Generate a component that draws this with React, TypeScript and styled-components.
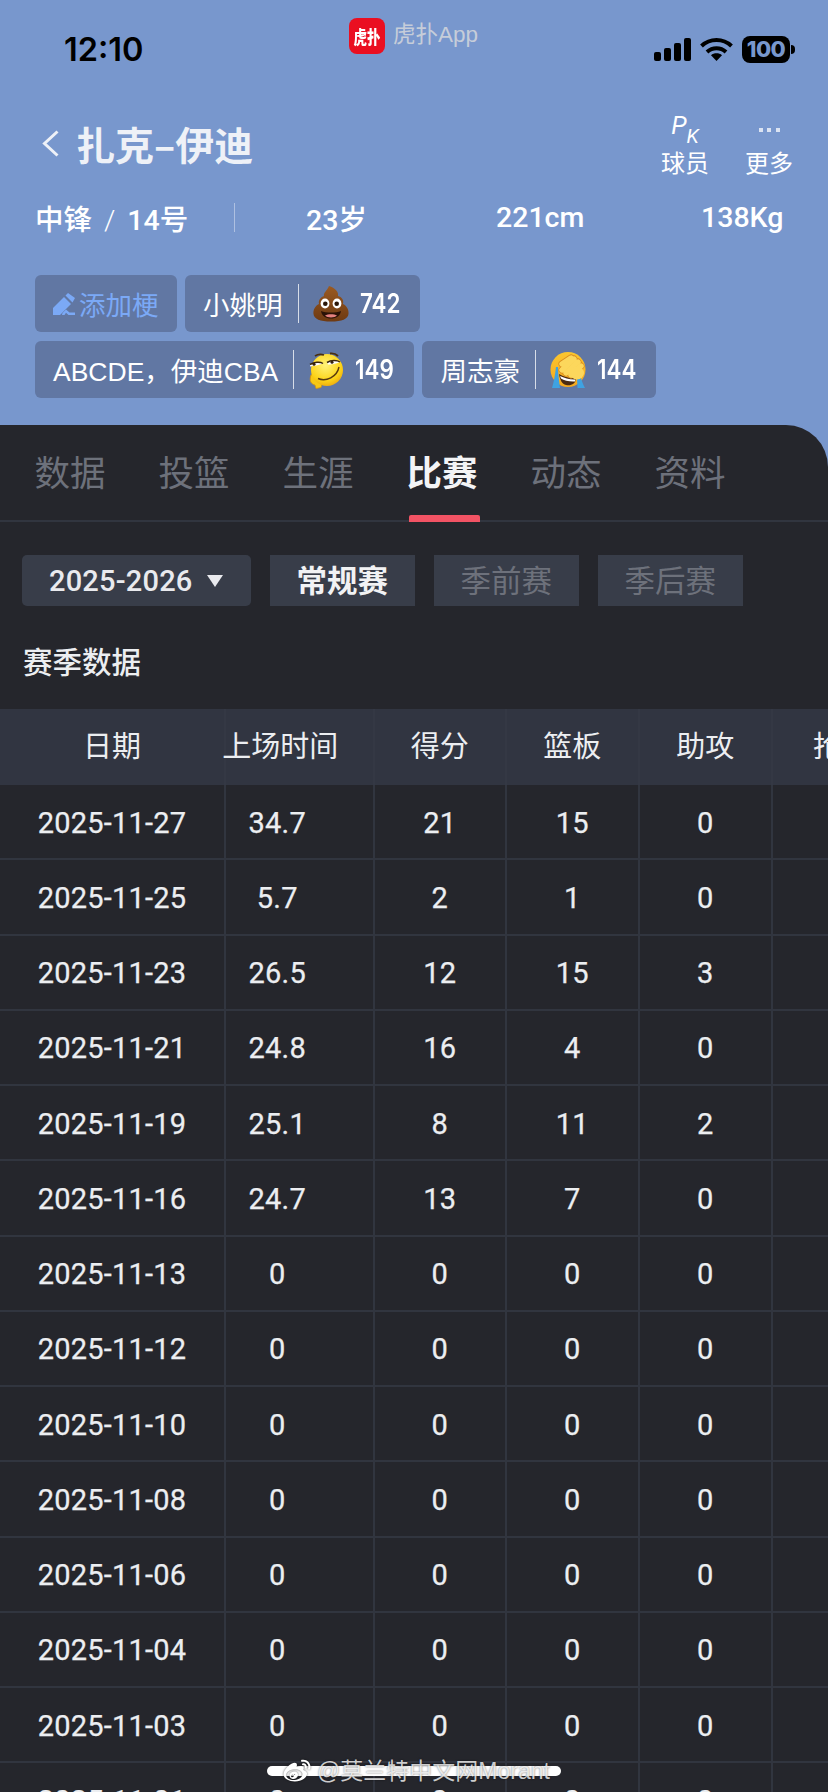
import React from "react";
import styled, { createGlobalStyle } from "styled-components";
import { FaWeibo } from "react-icons/fa";

const Global = createGlobalStyle`
  html, body { margin: 0; padding: 0; background: #25262c; }
  * { box-sizing: border-box; }
  body { font-family: Roboto, "Noto Sans CJK SC", sans-serif; }
`;

const Page = styled.div`
  position: relative;
  width: 828px;
  height: 1792px;
  overflow: hidden;
  background: #7897cd;
  display: flex;
  flex-direction: column;
`;

const StatusBar = styled.div`
  height: 112px;
  padding: 18px 33px 0 64px;
  display: grid;
  grid-template-columns: 285px 1fr auto;
  align-items: start;
  flex: none;
`;
const Time = styled.div`
  font-family: Inter, sans-serif;
  font-weight: 600;
  font-size: 32.5px;
  line-height: 40px;
  margin-top: 12px;
  color: #000;
`;
const AppChip = styled.div`
  display: flex;
  align-items: center;
  gap: 8px;
  height: 36px;
`;
const AppLogo = styled.div`
  width: 36px;
  height: 36px;
  border-radius: 8px;
  background: #ea0f21;
  display: flex;
  align-items: center;
  justify-content: center;
  overflow: hidden;
`;
const AppLogoText = styled.span`
  color: #fff;
  font-family: "Noto Sans CJK SC", sans-serif;
  font-weight: 900;
  font-size: 18px;
  line-height: 18px;
  white-space: nowrap;
  transform: scaleX(0.75);
`;
const AppName = styled.span`
  font-family: "Liberation Sans", "Noto Sans CJK SC", sans-serif;
  font-size: 22.5px;
  line-height: 30px;
  margin-bottom: 3px;
  color: #c6cdd9;
`;
const StatusIcons = styled.div`
  display: flex;
  align-items: center;
  height: 27px;
  margin-top: 18px;
  gap: 9px;
`;
const Battery = styled.div`
  display: flex;
  align-items: center;
  gap: 1px;
`;
const BatteryBody = styled.div`
  width: 48px;
  height: 27px;
  border-radius: 8px;
  background: #000;
  color: #7897cd;
  font-family: Inter, sans-serif;
  font-weight: 800;
  font-size: 22px;
  line-height: 27px;
  text-align: center;
  letter-spacing: -0.5px;
`;
const BatteryNub = styled.div`
  width: 4px;
  height: 9px;
  border-radius: 0 4px 4px 0;
  background: #000;
`;

const TitleRow = styled.div`
  height: 66px;
  padding: 0 35px 0 42px;
  display: flex;
  justify-content: space-between;
  align-items: flex-start;
  flex: none;
`;
const TitleLeft = styled.div`
  display: flex;
  align-items: center;
  height: 62px;
  gap: 17px;
`;
const Title = styled.h1`
  margin: 0;
  font-family: "Noto Sans CJK SC", sans-serif;
  font-size: 39px;
  font-weight: 700;
  line-height: 46px;
  color: #eef1f7;
  white-space: nowrap;
`;
const Actions = styled.div`
  display: flex;
  gap: 36px;
`;
const Action = styled.div`
  width: 48px;
  display: flex;
  flex-direction: column;
  align-items: center;
`;
const ActionMark = styled.div`
  height: 31px;
  width: 46px;
  display: flex;
  justify-content: center;
  align-items: center;
  margin-top: 2px;
`;
const PkMark = styled.div`
  display: flex;
  height: 28px;
  color: #fff;
  font-family: Roboto, sans-serif;
  font-weight: 400;
  font-style: italic;
`;
const PkP = styled.span`
  font-size: 25px;
  line-height: 20px;
  align-self: flex-start;
`;
const PkK = styled.span`
  font-size: 20px;
  line-height: 16px;
  align-self: flex-end;
`;
const Dots = styled.div`
  display: flex;
  gap: 4.5px;
`;
const Dot = styled.span`
  width: 4px;
  height: 4px;
  background: #dbe3f2;
`;
const ActionLabel = styled.div`
  font-family: "Noto Sans CJK SC", sans-serif;
  font-size: 24px;
  line-height: 33px;
  color: #fff;
  white-space: nowrap;
`;

const MetaRow = styled.div`
  margin-top: 19px;
  height: 40px;
  padding-left: 35px;
  display: grid;
  grid-template-columns: 199px 72px 190px 205px auto;
  align-items: center;
  color: #fff;
  font-size: 28.5px;
  font-weight: 500;
  flex: none;
`;
const MetaText = styled.span`
  white-space: nowrap;
`;
const MetaSlash = styled.span`
  font-weight: 300;
  margin: 0 12px;
`;
const MetaRule = styled.span`
  width: 1px;
  height: 29px;
  background: rgba(255, 255, 255, 0.4);
`;

const TagBlock = styled.div`
  margin: 38px 0 27px 35px;
  display: flex;
  flex-direction: column;
  gap: 9px;
  flex: none;
`;
const TagRow = styled.div`
  display: flex;
  gap: 8.5px;
`;
const Tag = styled.div`
  height: 57px;
  padding: 0 18px;
  display: flex;
  align-items: center;
  border-radius: 6px;
  background: #6177a3;
  color: #fff;
  font-family: "Liberation Sans", "Noto Sans CJK SC", sans-serif;
  font-size: 26.5px;
  white-space: nowrap;
`;
const AddLabel = styled.span`
  color: #7ba9f6;
  margin-left: 4px;
`;
const TagRule = styled.span`
  width: 1px;
  height: 39px;
  margin: 0 14px 0 15px;
  background: rgba(255, 255, 255, 0.75);
`;
const Count = styled.span`
  display: inline-block;
  margin-left: 11px;
  margin-right: -6px;
  font-family: Inter, sans-serif;
  font-weight: 600;
  font-size: 27px;
  transform: scaleX(0.83);
  transform-origin: left center;
`;
const EmojiBox = styled.svg`
  width: 36px;
  height: 38px;
  flex: none;
`;

const Panel = styled.div`
  flex: 1;
  min-height: 0;
  background: #25262c;
  border-top-right-radius: 42px;
  overflow: hidden;
`;
const Tabs = styled.div`
  height: 97px;
  padding: 0 0 0 35px;
  display: flex;
  gap: 54px;
  align-items: center;
  border-bottom: 2px solid #31353f;
`;
const TabItem = styled.div<{ $active?: boolean }>`
  position: relative;
  width: 70px;
  height: 95px;
  padding-top: 18px;
  font-family: "Noto Sans CJK SC", sans-serif;
  font-size: 35.5px;
  line-height: 56px;
  display: flex;
  justify-content: center;
  white-space: nowrap;
  font-weight: ${(p) => (p.$active ? 700 : 400)};
  color: ${(p) => (p.$active ? "#f3f4f6" : "#6d717b")};
  &::after {
    content: "";
    display: ${(p) => (p.$active ? "block" : "none")};
    position: absolute;
    left: 2px;
    width: 71px;
    bottom: -2px;
    height: 7px;
    border-radius: 2px 2px 0 0;
    background: #f25364;
  }
`;

const Filters = styled.div`
  margin-top: 33px;
  padding-left: 22px;
  display: flex;
  gap: 18.5px;
  height: 51px;
`;
const SeasonSelect = styled.div`
  width: 229px;
  padding-left: 27px;
  display: flex;
  align-items: center;
  gap: 14px;
  border-radius: 5px;
  background: #383d49;
  color: #e9eaee;
  font-size: 29px;
  font-weight: 500;
  letter-spacing: 0.2px;
`;
const Caret = styled.span`
  width: 0;
  height: 0;
  border-left: 8px solid transparent;
  border-right: 8px solid transparent;
  border-top: 12px solid #e9eaee;
`;
const SeasonType = styled.div<{ $active?: boolean }>`
  width: 145.5px;
  padding-bottom: 4px;
  background: #383d49;
  display: flex;
  align-items: center;
  justify-content: center;
  font-family: "Noto Sans CJK SC", sans-serif;
  font-size: 30.5px;
  font-weight: ${(p) => (p.$active ? 700 : 400)};
  color: ${(p) => (p.$active ? "#f1f2f4" : "#6d717b")};
`;

const SectionTitle = styled.div`
  height: 103px;
  padding: 34px 0 0 23px;
  font-family: "Noto Sans CJK SC", sans-serif;
  font-size: 29.5px;
  font-weight: 500;
  line-height: 40px;
  color: #eceef1;
`;

const COLS = "226px 148.5px 132.5px 132.5px 133.5px 140px";
const HeadRow = styled.div`
  height: 76px;
  width: 912px;
  display: grid;
  grid-template-columns: ${COLS};
  background: #313541;
`;
const HeadCell = styled.div<{ $pr?: number }>`
  display: flex;
  align-items: center;
  justify-content: center;
  padding-right: ${(p) => p.$pr ?? 0}px;
  padding-bottom: 7px;
  font-family: "Noto Sans CJK SC", sans-serif;
  font-size: 29px;
  color: #eceef1;
  white-space: nowrap;
  border-right: 2px solid #343844;
`;
const DataRow = styled.div`
  height: 75.25px;
  width: 912px;
  display: grid;
  grid-template-columns: ${COLS};
  border-bottom: 2px solid #31353f;
`;
const DataCell = styled.div<{ $pr?: number }>`
  display: flex;
  align-items: center;
  justify-content: center;
  padding-right: ${(p) => p.$pr ?? 0}px;
  padding-top: 2px;
  font-size: 29px;
  font-weight: 400;
  letter-spacing: 0.2px;
  -webkit-text-stroke: 0.25px #eceef1;
  color: #eceef1;
  border-right: 2px solid #31353f;
`;

const HomeBar = styled.div`
  position: absolute;
  left: 267px;
  top: 1766px;
  width: 294px;
  height: 10px;
  border-radius: 5px;
  background: #fff;
`;
const Watermark = styled.div`
  position: absolute;
  left: 282px;
  top: 1756px;
  display: flex;
  align-items: center;
  gap: 5px;
  color: rgba(255, 255, 255, 0.78);
  font-family: "Liberation Sans", "Noto Sans CJK SC", sans-serif;
  font-size: 23px;
  line-height: 30px;
  height: 30px;
  white-space: nowrap;
  text-shadow: 0 0 2px rgba(0, 0, 0, 0.55);
`;
const WeiboGlyph = styled(FaWeibo)`
  width: 30px;
  height: 27px;
  color: #fff;
  filter: drop-shadow(0 0 1px rgba(0, 0, 0, 0.6));
`;

const Signal = () => (
  <svg width="37" height="23" viewBox="0 0 37 23">
    <rect x="0" y="14" width="7" height="9" rx="2" />
    <rect x="10" y="10" width="7" height="13" rx="2" />
    <rect x="20" y="5" width="7" height="18" rx="2" />
    <rect x="30" y="0" width="7" height="23" rx="2" />
  </svg>
);
const Wifi = () => (
  <svg width="33" height="23" viewBox="0 0 33 23" fill="none" stroke="#000" strokeWidth="4">
    <path d="M1.5 8 C10 0 23 0 31.5 8" />
    <path d="M7 14 C12.5 9 20.5 9 26 14" />
    <path d="M16.5 23 L11 17.2 C14 14.6 19 14.6 22 17.2 Z" fill="#000" stroke="none" />
  </svg>
);
const BackIcon = () => (
  <svg width="17" height="27" viewBox="0 0 17 27" fill="none" stroke="#eef1f7" strokeWidth="3">
    <path d="M15.5 1.5 L2.5 13.5 L15.5 25.5" />
  </svg>
);
const PencilIcon = () => (
  <svg width="22" height="22" viewBox="0 0 22 22" fill="#7ba9f6">
    <path d="M0 22 V15 L11 4 L18 11 L7 22 Z" />
    <path d="M12.5 2.5 L15 0 L22 5 L19.5 9.5 Z" />
    <path d="M9.5 20 L13 16.5 L16.5 19.5 L22 19.5 V22 H15.5 L13 19.8 L11.5 22 H9 Z" />
  </svg>
);

const PooEmoji = () => (
  <EmojiBox viewBox="0 0 36 38">
    <defs>
      <linearGradient id="poo" x1="0" y1="0" x2="0" y2="1">
        <stop offset="0" stopColor="#9a5a22" />
        <stop offset="1" stopColor="#6e3a12" />
      </linearGradient>
    </defs>
    <path
      d="M16 1 C22 3 26 7 25 11 C29 12 31 15 30 19 C34 21 36 25 35.5 29 C35 34 29 36.5 18 36.5 C7 36.5 1 34 .5 29 C0 25 2 21 6 19 C5 15 8 12 11 11 C10 8 14 6 16 1 Z"
      fill="url(#poo)"
    />
    <path d="M8 19 C12 22 24 22 28 19" stroke="#7a4215" strokeWidth="1" fill="none" />
    <ellipse cx="12" cy="18.5" rx="4.4" ry="5" fill="#fff" />
    <ellipse cx="24" cy="18.5" rx="4.4" ry="5" fill="#fff" />
    <circle cx="12.3" cy="18.8" r="2.3" fill="#2b1608" />
    <circle cx="23.7" cy="18.8" r="2.3" fill="#2b1608" />
    <path d="M8 26 C13 28 23 28 28 26 C27 31.5 23 33.5 18 33.5 C13 33.5 9 31.5 8 26 Z" fill="#2a1207" />
    <path d="M12 30.5 C15 28.8 21 28.8 24 30.5 C22 33 14 33 12 30.5 Z" fill="#e5817f" />
  </EmojiBox>
);
const SmirkEmoji = () => (
  <EmojiBox viewBox="0 0 36 38">
    <defs>
      <radialGradient id="smirk" cx="0.45" cy="0.35" r="0.75">
        <stop offset="0" stopColor="#fff27a" />
        <stop offset="0.65" stopColor="#fcd317" />
        <stop offset="1" stopColor="#e79a0b" />
      </radialGradient>
    </defs>
    <path d="M3 24 C1 30 3 33 7 34 L8 37.5 L13 36.5 L15 30 L8 22 Z" fill="#f7c813" stroke="#d7940d" strokeWidth="0.8" />
    <circle cx="19" cy="19" r="16" fill="url(#smirk)" />
    <path d="M7 5 C10 3 13 3 16 4" stroke="#4a2f10" strokeWidth="1.8" fill="none" />
    <path d="M22 2.5 C26 2 28 3 30 5" stroke="#4a2f10" strokeWidth="1.8" fill="none" />
    <path d="M2 13.5 C6 11 12 10.5 15 12.5 C11 14 6 15 2 15.5 Z" fill="#fff" />
    <path d="M2 13.5 C6 11 12 10.5 15 12.5" stroke="#3b250c" strokeWidth="1.5" fill="none" />
    <path d="M19 11.5 C23 9 29 9 32 11 C28 13 23 13.5 20 13.5 Z" fill="#fff" />
    <path d="M19 11.5 C23 9 29 9 32 11" stroke="#3b250c" strokeWidth="1.5" fill="none" />
    <circle cx="6" cy="13.2" r="1.5" fill="#33200c" />
    <circle cx="24" cy="11.3" r="1.5" fill="#33200c" />
    <path d="M10 27.5 C18 31 29 26 31 16" stroke="#5a3a10" strokeWidth="1.4" fill="none" />
  </EmojiBox>
);
const FacepalmEmoji = () => (
  <EmojiBox viewBox="0 0 36 38">
    <defs>
      <linearGradient id="palm" x1="0" y1="0" x2="0" y2="1">
        <stop offset="0" stopColor="#fbc62f" />
        <stop offset="1" stopColor="#f6a81d" />
      </linearGradient>
    </defs>
    <circle cx="18" cy="18.5" r="17.5" fill="url(#palm)" />
    <path d="M6 16 C5 24 4 30 2 37 H10 C9 30 8 22 8 16 Z" fill="#3fa2e2" />
    <path d="M27 27 L27.5 37 H35 C33 34 32 30 31 27 Z" fill="#3fa2e2" />
    <path d="M9 23 C14 26 22 28 26 27 C26 33 21 35 16 34 C12 33 10 29 9 23 Z" fill="#4a2a12" />
    <path d="M10 25 C14 27 21 29 25.5 28.5 L25 30.5 C20 31 14 29.5 11 27.5 Z" fill="#fff" />
    <g fill="none" strokeLinecap="round">
      <g stroke="#d98c1e" strokeWidth="7">
        <path d="M12 13 L21 7" />
        <path d="M12 19 L24 8" />
        <path d="M16 22 L28 11" />
        <path d="M21 24 L31 15" />
      </g>
      <g stroke="#fcd75c" strokeWidth="5.4">
        <path d="M12 13 L21 7" />
        <path d="M12 19 L24 8" />
        <path d="M16 22 L28 11" />
        <path d="M21 24 L31 15" />
      </g>
    </g>
    <ellipse cx="27" cy="22" rx="7" ry="6.5" fill="#fcd75c" />
  </EmojiBox>
);

const rows: [string, string, string, string, string][] = [
  ["2025-11-27", "34.7", "21", "15", "0"],
  ["2025-11-25", "5.7", "2", "1", "0"],
  ["2025-11-23", "26.5", "12", "15", "3"],
  ["2025-11-21", "24.8", "16", "4", "0"],
  ["2025-11-19", "25.1", "8", "11", "2"],
  ["2025-11-16", "24.7", "13", "7", "0"],
  ["2025-11-13", "0", "0", "0", "0"],
  ["2025-11-12", "0", "0", "0", "0"],
  ["2025-11-10", "0", "0", "0", "0"],
  ["2025-11-08", "0", "0", "0", "0"],
  ["2025-11-06", "0", "0", "0", "0"],
  ["2025-11-04", "0", "0", "0", "0"],
  ["2025-11-03", "0", "0", "0", "0"],
  ["2025-11-01", "0", "0", "0", "0"],
];

const tabs = ["数据", "投篮", "生涯", "比赛", "动态", "资料"];
const heads = ["日期", "上场时间", "得分", "篮板", "助攻", "抢断"];

export default function App() {
  return (
    <Page>
      <Global />
      <StatusBar>
        <Time>12:10</Time>
        <AppChip>
          <AppLogo>
            <AppLogoText>虎扑</AppLogoText>
          </AppLogo>
          <AppName>虎扑App</AppName>
        </AppChip>
        <StatusIcons>
          <Signal />
          <Wifi />
          <Battery>
            <BatteryBody>100</BatteryBody>
            <BatteryNub />
          </Battery>
        </StatusIcons>
      </StatusBar>

      <TitleRow>
        <TitleLeft>
          <BackIcon />
          <Title>扎克–伊迪</Title>
        </TitleLeft>
        <Actions>
          <Action>
            <ActionMark>
              <PkMark>
                <PkP>P</PkP>
                <PkK>K</PkK>
              </PkMark>
            </ActionMark>
            <ActionLabel>球员</ActionLabel>
          </Action>
          <Action>
            <ActionMark>
              <Dots>
                <Dot />
                <Dot />
                <Dot />
              </Dots>
            </ActionMark>
            <ActionLabel>更多</ActionLabel>
          </Action>
        </Actions>
      </TitleRow>

      <MetaRow>
        <MetaText>
          中锋<MetaSlash>/</MetaSlash>14号
        </MetaText>
        <MetaRule />
        <MetaText>23岁</MetaText>
        <MetaText>221cm</MetaText>
        <MetaText>138Kg</MetaText>
      </MetaRow>

      <TagBlock>
        <TagRow>
          <Tag>
            <PencilIcon />
            <AddLabel>添加梗</AddLabel>
          </Tag>
          <Tag>
            小姚明
            <TagRule />
            <PooEmoji />
            <Count>742</Count>
          </Tag>
        </TagRow>
        <TagRow>
          <Tag>
            ABCDE，伊迪CBA
            <TagRule />
            <SmirkEmoji />
            <Count>149</Count>
          </Tag>
          <Tag>
            周志豪
            <TagRule />
            <FacepalmEmoji />
            <Count>144</Count>
          </Tag>
        </TagRow>
      </TagBlock>

      <Panel>
        <Tabs>
          {tabs.map((t) => (
            <TabItem key={t} $active={t === "比赛"}>
              {t}
            </TabItem>
          ))}
        </Tabs>
        <Filters>
          <SeasonSelect>
            2025-2026
            <Caret />
          </SeasonSelect>
          <SeasonType $active>常规赛</SeasonType>
          <SeasonType>季前赛</SeasonType>
          <SeasonType>季后赛</SeasonType>
        </Filters>
        <SectionTitle>赛季数据</SectionTitle>
        <HeadRow>
          {heads.map((h, i) => (
            <HeadCell key={h} $pr={i === 1 ? 38 : 0}>
              {h}
            </HeadCell>
          ))}
        </HeadRow>
        {rows.map((r) => (
          <DataRow key={r[0]}>
            {r.map((v, i) => (
              <DataCell key={i} $pr={i === 1 ? 44 : 0}>
                {v}
              </DataCell>
            ))}
            <DataCell />
          </DataRow>
        ))}
      </Panel>

      <HomeBar />
      <Watermark>
        <WeiboGlyph />
        @莫兰特中文网Morant
      </Watermark>
    </Page>
  );
}
